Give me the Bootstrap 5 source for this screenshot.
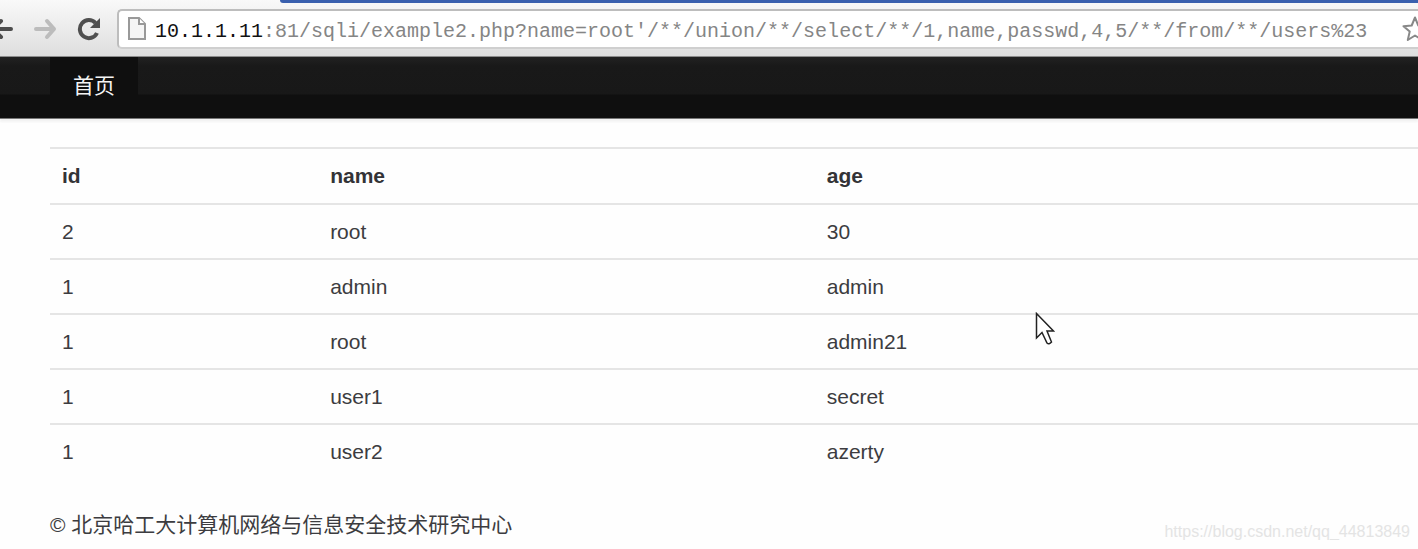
<!DOCTYPE html>
<html lang="zh-CN">
<head>
<meta charset="utf-8">
<meta name="viewport" content="width=device-width, initial-scale=1">
<title>首页</title>
<link href="https://cdn.jsdelivr.net/npm/bootstrap@5.3.0/dist/css/bootstrap.min.css" rel="stylesheet">
<script src="https://cdn.jsdelivr.net/npm/bootstrap@5.3.0/dist/js/bootstrap.bundle.min.js" defer></script>
<style>
  body {
    font-family: "Liberation Sans", "Noto Sans CJK SC", sans-serif;
    font-size: 21px;
    line-height: 30px;
    color: #3c3c40;
    background: #fefefe;
  }
  .browser-bar {
    background: linear-gradient(#f9f9f9, #dedede);
    border-bottom: 1px solid #8c8c8c;
  }
  .title-strip {
    height: 3px;
    margin-left: 280px;
    background: #3a60ae;
    border-bottom-left-radius: 3px;
  }
  .tool-row { height: 53px; padding-bottom: 1px; }
  .tool-btn { width: 42px; height: 40px; }
  .tool-btn.back-btn { width: 24px; }
  .tool-btn.reload-btn { width: 46px; }
  .address-box {
    height: 40px;
    margin-left: 5px;
    background: #fff;
    border: 2px solid #bdbdbd;
    border-bottom-color: #cfcfcf;
    border-right: 0;
    border-radius: 5px 0 0 5px;
    font-family: "Liberation Mono", monospace;
    font-size: 20px;
  }
  .address-host, .address-path { padding: 5px 0 0; }
  .address-host { color: #111; }
  .address-path { color: #858585; min-width: 0; outline: 0; }
  .star-btn { margin-right: -10px; }
  .site-nav {
    height: 62px;
    background: linear-gradient(#222 0, #191919 9px, #181818 37px, #0f0f0f 38px);
    border-bottom: 1px solid #777;
    box-shadow: 0 3px 2px #f3f3f3;
  }
  .site-nav .nav-link {
    padding: 14px 23px 17px;
    color: #f4f4f4;
    background: #0f0f0f;
  }
  .page-indent { padding-left: 50px; }
  .page-main { padding-top: 28px; }
  .user-table {
    --bs-table-color: #3c3c40;
    --bs-table-bg: transparent;
    table-layout: fixed;
  }
  .user-table > * > tr > * {
    padding: 12px 12px 11px;
    border-width: 2px 0 0;
    border-color: #e5e5e5;
  }
  .user-table > thead > tr > th { padding-bottom: 12px; color: #333336; }
  .col-id { width: 19.6%; }
  .col-name { width: 36.3%; }
  .pointer { top: 193px; left: 73%; }
  .page-footer { margin-top: 32px; }
  .watermark { font-size: 16px; line-height: 16px; color: #e4e4e4; }
</style>
</head>
<body>
<header>
  <div class="browser-bar overflow-hidden">
    <div class="title-strip"></div>
    <div class="tool-row d-flex align-items-center">
      <button type="button" class="tool-btn back-btn btn p-0 border-0 d-flex align-items-center" aria-label="Back">
        <svg width="16" height="24" viewBox="0 0 16 24" fill="none" stroke="#4c4c4c" stroke-width="4" stroke-linecap="round"><path d="M-6 12H11M1 4L-7 12L1 20"/></svg>
      </button>
      <button type="button" class="tool-btn btn p-0 border-0 d-flex align-items-center justify-content-center" aria-label="Forward">
        <svg width="24" height="24" viewBox="0 0 24 24" fill="none" stroke="#bcbcbc" stroke-width="4" stroke-linecap="round" stroke-linejoin="round"><path d="M3 12H21M14 4L21 12L14 20"/></svg>
      </button>
      <button type="button" class="tool-btn reload-btn btn p-0 border-0 d-flex align-items-center justify-content-center" aria-label="Reload">
        <svg width="24" height="24" viewBox="0 0 24 24"><path d="M18.5 6A9 9 0 1 0 20 16" fill="none" stroke="#505050" stroke-width="4"/><path d="M23 1V11H13Z" fill="#505050"/></svg>
      </button>
      <div class="address-box flex-grow-1 d-flex align-items-center">
        <svg class="ms-2 me-2 flex-shrink-0" width="20" height="24" viewBox="0 0 20 24"><path d="M2 1H12L18 7V22H2Z" fill="#f5f5f5" stroke="#999" stroke-width="2"/><path d="M12 1V7H18" fill="#fff" stroke="#999" stroke-width="2"/></svg>
        <label class="address-host" for="address">10.1.1.11</label>
        <input id="address" type="text" class="address-path flex-grow-1 border-0 bg-transparent" spellcheck="false" value=":81/sqli/example2.php?name=root'/**/union/**/select/**/1,name,passwd,4,5/**/from/**/users%23">
        <button type="button" class="star-btn btn p-0 border-0 d-flex ms-2 flex-shrink-0" aria-label="Bookmark">
          <svg width="26" height="26" viewBox="0 0 26 26"><path d="M13 1.5L16.3 9.5L24.5 10.2L18.3 15.6L20.2 24L13 19.5L5.8 24L7.7 15.6L1.5 10.2L9.7 9.5Z" fill="#fff" stroke="#888" stroke-width="2" stroke-linejoin="round"/></svg>
        </button>
      </div>
    </div>
  </div>
  <nav class="site-nav page-indent d-flex align-items-start">
    <a class="nav-link" href="#">首页</a>
  </nav>
</header>
<main class="page-main page-indent position-relative">
  <table class="user-table table mb-0">
    <colgroup><col class="col-id"><col class="col-name"><col></colgroup>
    <thead>
      <tr><th scope="col">id</th><th scope="col">name</th><th scope="col">age</th></tr>
    </thead>
    <tbody>
      <tr><td>2</td><td>root</td><td>30</td></tr>
      <tr><td>1</td><td>admin</td><td>admin</td></tr>
      <tr><td>1</td><td>root</td><td>admin21</td></tr>
      <tr><td>1</td><td>user1</td><td>secret</td></tr>
      <tr><td>1</td><td>user2</td><td>azerty</td></tr>
    </tbody>
  </table>
  <svg class="pointer position-absolute" width="20" height="34" viewBox="0 0 20 34"><path d="M1.5 1.5V26L7 20.5L12 31Q14 33 16.5 30L12 19H18.5Z" fill="#fff" stroke="#222" stroke-width="1.5"/></svg>
</main>
<footer class="page-footer page-indent d-flex justify-content-between align-items-end">
  <span>© 北京哈工大计算机网络与信息安全技术研究中心</span>
  <span class="watermark pe-2">https://blog.csdn.net/qq_44813849</span>
</footer>
</body>
</html>
